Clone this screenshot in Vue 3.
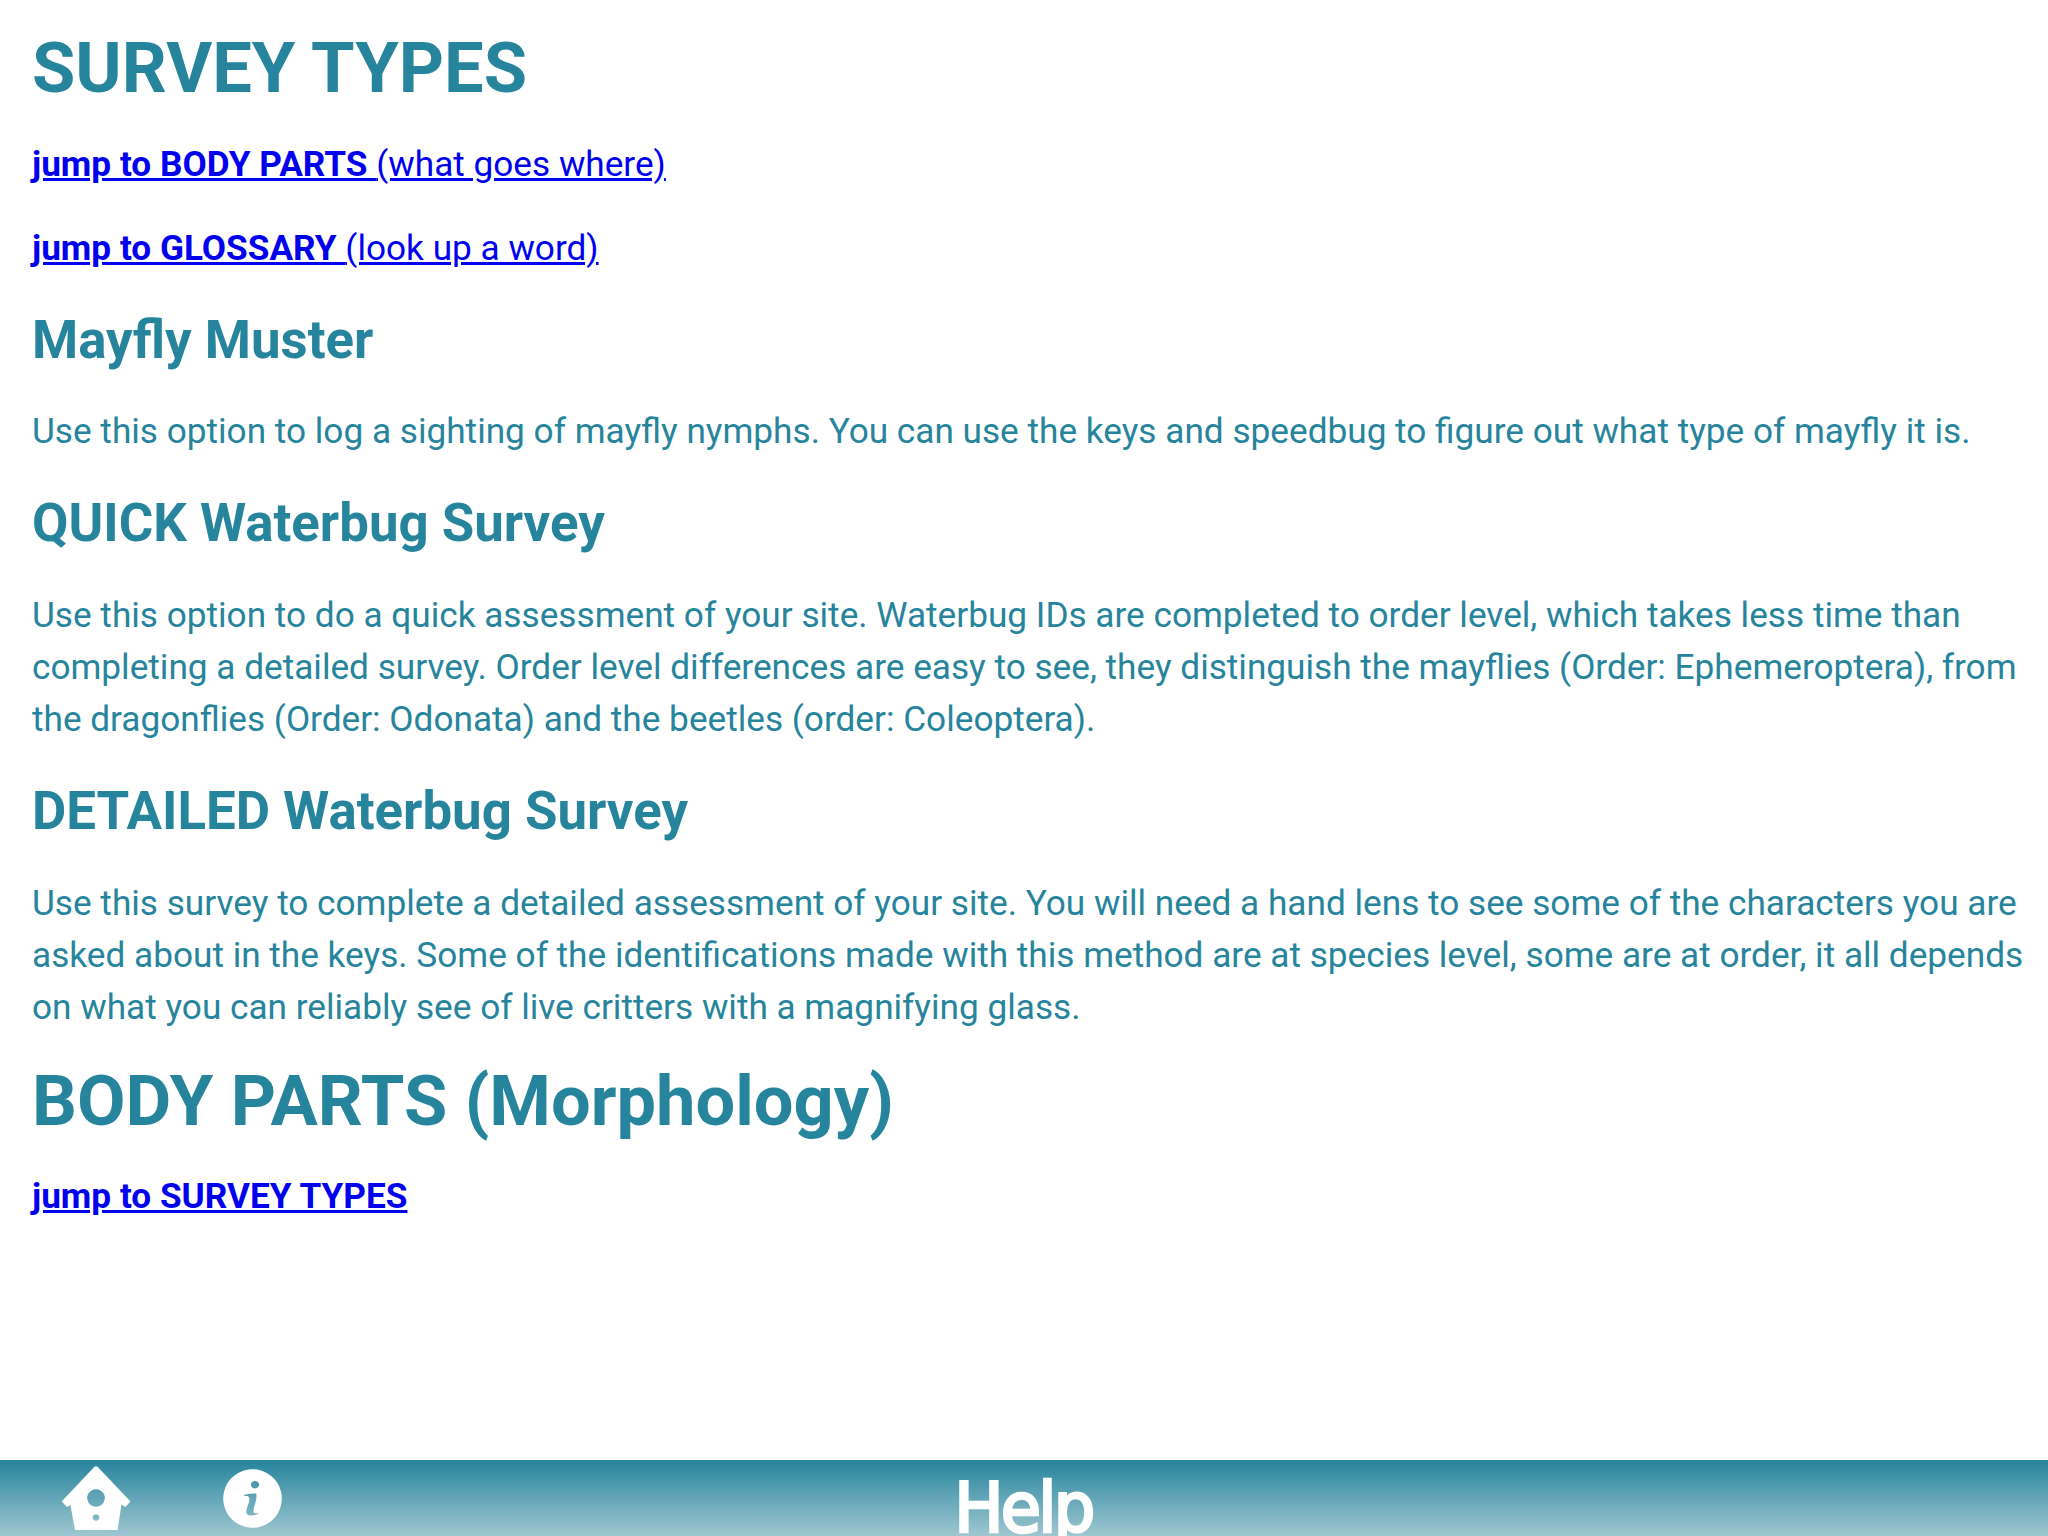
<script setup>
const sections = [
  {
    title: 'Mayfly Muster',
    lines: ['Use this option to log a sighting of mayfly nymphs. You can use the keys and speedbug to figure out what type of mayfly it is.'],
  },
  {
    title: 'QUICK Waterbug Survey',
    lines: [
      'Use this option to do a quick assessment of your site. Waterbug IDs are completed to order level, which takes less time than',
      'completing a detailed survey. Order level differences are easy to see, they distinguish the mayflies (Order: Ephemeroptera), from',
      'the dragonflies (Order: Odonata) and the beetles (order: Coleoptera).',
    ],
  },
  {
    title: 'DETAILED Waterbug Survey',
    lines: [
      'Use this survey to complete a detailed assessment of your site. You will need a hand lens to see some of the characters you are',
      'asked about in the keys. Some of the identifications made with this method are at species level, some are at order, it all depends',
      'on what you can reliably see of live critters with a magnifying glass.',
    ],
  },
]
</script>

<template>
  <div class="screen">
    <main class="content">
      <h1 id="survey">SURVEY TYPES</h1>
      <p><a href="#body"><b>jump to BODY PARTS </b>(what goes where)</a></p>
      <p><a href="#glossary"><b>jump to GLOSSARY </b>(look up a word)</a></p>
      <template v-for="s in sections" :key="s.title">
        <h2>{{ s.title }}</h2>
        <p><span v-for="l in s.lines" :key="l" class="line">{{ l }}</span></p>
      </template>
      <h1 id="body" class="next">BODY PARTS (Morphology)</h1>
      <p><a href="#survey"><b>jump to SURVEY TYPES</b></a></p>
    </main>
    <footer class="bar">
      <nav class="icons">
        <svg class="home" viewBox="0 0 70 66" width="70" height="66">
          <path fill="#fff" fill-rule="evenodd" d="M33 1.2Q35 -.6 37 1.2L69.5 35.5L64.5 41Q62.5 40.5 60.6 38.2L56.5 64H14L9.3 38.4Q7.5 41.2 5.5 40.6L.6 35.5ZM35 23.2a8.8 8.8 0 1 0 .01 0ZM35 48.2a3.3 3.3 0 1 0 .01 0Z" />
        </svg>
        <svg class="info" viewBox="0 0 59 59" width="59" height="59">
          <path fill="#fff" fill-rule="evenodd" d="M29.5 .2a29.3 29.3 0 1 0 .01 0ZM32 12a4.1 3.7 0 1 0 .01 0ZM21.3 25.7Q27 24.6 33.2 24.5Q34 28 32.5 33.5Q30.2 40 30.5 43.3C31 45.3 33.5 44.2 35.8 43.8C35.4 45.3 31.5 46.6 28.5 46.6C24 46.6 22.8 45 23.5 41C24 37.5 27.2 32 26.3 28.8C25.7 26.8 23.5 26.8 21.3 27.2Z" />
        </svg>
      </nav>
      <div class="title">Help</div>
    </footer>
  </div>
</template>

<style>
body { margin: 0; background: #fff; }
</style>

<style scoped>
.screen {
  width: 2048px;
  height: 1536px;
  overflow: hidden;
  display: flex;
  flex-direction: column;
  background: #fff;
  color: #26849c;
  font: 35.2px/52px Roboto, sans-serif;
}
.content { flex: 1; padding: 33px 0 0 32px; }
h1 { margin: 0 0 35px; font-size: 70.4px; line-height: 70px; font-weight: 700; }
h1.next { margin: 33px 0 34px; }
h2 { margin: 33px 0 32px; font-size: 52.8px; line-height: 67px; font-weight: 700; }
h2:first-of-type { margin-bottom: 31px; }
p { margin: 0 0 32px; }
a { color: #0000ee; text-decoration: underline; }
.line { display: block; white-space: nowrap; }
.bar {
  flex: none;
  height: 76px;
  display: grid;
  grid-template-columns: 1fr auto 1fr;
  background: linear-gradient(#26849c, #9fc7d1);
}
.icons { display: flex; align-items: flex-start; }
.home { margin: 6px 0 0 61px; }
.info { margin: 9px 0 0 92px; }
.title {
  color: #fff;
  font-family: "DejaVu Sans Condensed", "DejaVu Sans", sans-serif;
  font-stretch: condensed;
  font-size: 70px;
  line-height: 88px;
  letter-spacing: -2.7px;
  -webkit-text-stroke: 2.7px #fff;
  padding: 4px 2px 0 0;
  height: 72px;
  transform: scaleX(1.04);
}
</style>
